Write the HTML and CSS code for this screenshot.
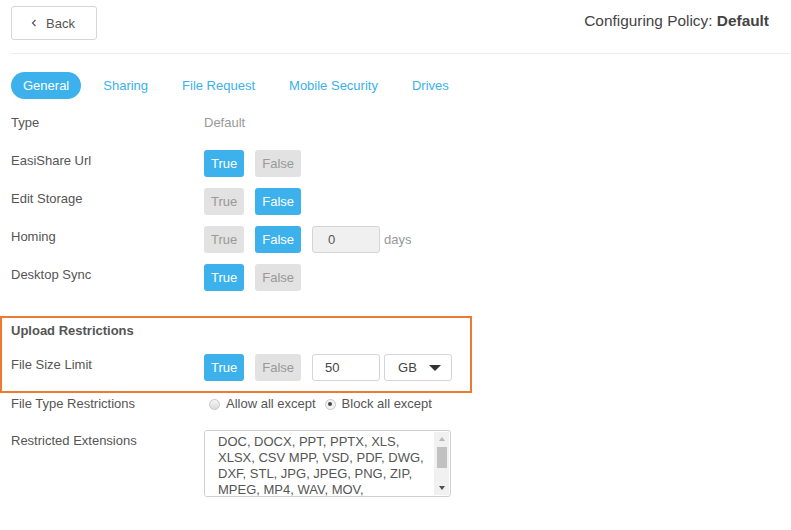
FILE: index.html
```html
<!DOCTYPE html>
<html lang="en">
  <head>
    <meta charset="UTF-8" />
    <meta name="viewport" content="width=device-width, initial-scale=1.0" />
    <title>Configuring Policy</title>
    <link rel="stylesheet" href="styles.css">
  </head>
  <body>
    <div class="page">
      <div class="topbar">
        <button class="back-btn" type="button">
          <svg class="chevron" width="6" height="8" viewBox="0 0 6 8">
            <path d="M4.5 1 L1.5 4 L4.5 7" fill="none" stroke="#555" stroke-width="1.2" />
          </svg>
          Back
        </button>
        <div class="policy-title">Configuring Policy: <b>Default</b></div>
      </div>

      <div class="tabs">
        <a class="tab active">General</a>
        <a class="tab">Sharing</a>
        <a class="tab">File Request</a>
        <a class="tab">Mobile Security</a>
        <a class="tab">Drives</a>
      </div>

      <div class="settings">
        <div class="row">
          <div class="label">Type</div>
          <div class="value muted">Default</div>
        </div>

        <div class="row">
          <div class="label">EasiShare Url</div>
          <div class="controls">
            <button class="toggle on">True</button>
            <button class="toggle">False</button>
          </div>
        </div>

        <div class="row">
          <div class="label">Edit Storage</div>
          <div class="controls">
            <button class="toggle">True</button>
            <button class="toggle on">False</button>
          </div>
        </div>

        <div class="row">
          <div class="label">Homing</div>
          <div class="controls">
            <button class="toggle">True</button>
            <button class="toggle on">False</button>
            <input class="num-input disabled" type="text" value="0" disabled />
            <span class="unit">days</span>
          </div>
        </div>

        <div class="row">
          <div class="label">Desktop Sync</div>
          <div class="controls">
            <button class="toggle on">True</button>
            <button class="toggle">False</button>
          </div>
        </div>

        <div class="highlight-box">
          <div class="section-title">Upload Restrictions</div>
          <div class="row last">
            <div class="label">File Size Limit</div>
            <div class="controls">
              <button class="toggle on">True</button>
              <button class="toggle">False</button>
              <input class="num-input" type="text" value="50" />
              <div class="select-box">
                <span>GB</span>
                <span class="caret"></span>
              </div>
            </div>
          </div>
        </div>

        <div class="row radio-row">
          <div class="label">File Type Restrictions</div>
          <div class="radios">
            <label class="radio"><span class="dot"></span>Allow all except</label>
            <label class="radio"><span class="dot checked"></span>Block all except</label>
          </div>
        </div>

        <div class="row">
          <div class="label">Restricted Extensions</div>
          <div class="ext-box">
            <textarea class="ext-list">DOC, DOCX, PPT, PPTX, XLS, XLSX, CSV MPP, VSD, PDF, DWG, DXF, STL, JPG, JPEG, PNG, ZIP, MPEG, MP4, WAV, MOV,
AVI, WMV, MP3, TXT, RTF, MKV, GIF, BMP, TIF, TIFF, PSD, AI, EPS, SVG, KEY, NUMBERS, PAGES</textarea>
            <div class="scrollbar">
              <span class="arrow up"></span>
              <div class="track"><div class="thumb"></div></div>
              <span class="arrow down"></span>
            </div>
          </div>
        </div>
      </div>
    </div>
  </body>
</html>
```

FILE: styles.css
```css
* {
  margin: 0;
  padding: 0;
  box-sizing: border-box;
}

body {
  font-family: 'Liberation Sans', Arial, sans-serif;
  font-size: 13px;
  color: #555;
  background: #fff;
}

.page {
  padding: 6px 1px 0 0;
}

.topbar {
  display: flex;
  justify-content: space-between;
  align-items: flex-start;
  margin-left: 11px;
  padding-right: 21px;
  height: 48px;
  border-bottom: 1px solid #ececf0;
}

.back-btn {
  width: 86px;
  height: 34px;
  border: 1px solid #d6d6d6;
  border-radius: 3px;
  background: #fff;
  font-family: inherit;
  font-size: 13px;
  color: #555;
  display: flex;
  align-items: center;
  justify-content: center;
  gap: 9px;
  padding-right: 2px;
}

.chevron {
  display: block;
}

.policy-title {
  font-size: 15.4px;
  color: #444;
  margin-top: 6px;
}

.tabs {
  display: flex;
  gap: 10px;
  margin: 18px 0 0 11px;
}

.tab {
  height: 27px;
  line-height: 27px;
  padding: 0 12px;
  border-radius: 14px;
  color: #3cb1ec;
  cursor: pointer;
}

.tab.active {
  background: #3cb1ec;
  color: #fff;
}

.settings {
  margin-top: 13px;
}

.row {
  display: flex;
  align-items: flex-start;
  padding-left: 11px;
  margin-bottom: 11px;
  min-height: 27px;
}

.label {
  width: 193px;
  flex: none;
  line-height: 20px;
  padding-top: 1px;
}

.value {
  line-height: 20px;
  padding-top: 1px;
}

.muted {
  color: #999;
}

.controls {
  display: flex;
  align-items: center;
}

.toggle {
  height: 27px;
  padding: 0 7px;
  border: none;
  border-radius: 3px;
  background: #e2e2e2;
  color: #999;
  font-family: inherit;
  font-size: 13px;
  margin-right: 11px;
}

.toggle.on {
  background: #3cb1ec;
  color: #fff;
}

.num-input {
  width: 68px;
  height: 27px;
  border: 1px solid #d4d4d4;
  border-radius: 3px;
  padding: 0 12px;
  font-family: inherit;
  font-size: 13px;
  color: #444;
  background: #fff;
}

.num-input.disabled {
  background: #f0f0f0;
  color: #555;
  padding-left: 15px;
}

.unit {
  color: #999;
  margin-left: 4px;
}

.select-box {
  width: 68px;
  height: 27px;
  margin-left: 4px;
  border: 1px solid #d4d4d4;
  border-radius: 3px;
  display: flex;
  align-items: center;
  justify-content: space-between;
  padding: 0 10px 0 13px;
  color: #444;
}

.caret {
  width: 0;
  height: 0;
  border-left: 6px solid transparent;
  border-right: 6px solid transparent;
  border-top: 6px solid #333;
}

.highlight-box {
  width: 472px;
  border: 2px solid #ec7b30;
  margin-top: 25px;
  padding-top: 3px;
}

.highlight-box .row {
  padding-left: 9px;
}

.section-title {
  font-weight: bold;
  line-height: 20px;
  padding-left: 9px;
  margin-bottom: 13px;
}

.highlight-box .row.last {
  margin-bottom: 10px;
}

.radio-row {
  min-height: 26px;
}

.radios {
  display: flex;
  align-items: center;
  line-height: 20px;
  padding-left: 5px;
  padding-top: 1px;
}

.radio {
  display: flex;
  align-items: center;
  margin-right: 9px;
  color: #555;
}

.dot {
  width: 11px;
  height: 11px;
  border-radius: 50%;
  border: 1px solid #c8c8c8;
  background: linear-gradient(#f4f4f4, #dcdcdc);
  margin-right: 6px;
  position: relative;
}

.dot.checked {
  background: #f2f2f2;
}

.dot.checked::after {
  content: '';
  position: absolute;
  top: 2.5px;
  left: 2.5px;
  width: 4px;
  height: 4px;
  border-radius: 50%;
  background: #444;
}

.ext-box {
  display: flex;
  width: 247px;
  height: 67px;
  border: 1px solid #cfcfcf;
  border-radius: 3px;
  overflow: hidden;
}

.ext-list {
  flex: 1;
  min-width: 0;
  border: none;
  outline: none;
  padding: 3px 4px 0 13px;
  font-family: inherit;
  font-size: 13px;
  line-height: 16px;
  color: #555;
  resize: none;
  overflow: hidden;
}

.scrollbar {
  width: 15px;
  margin: 1px 1px 1px 0;
  background: #f1f1f1;
  display: flex;
  flex-direction: column;
  align-items: center;
}

.arrow {
  width: 0;
  height: 0;
  border-left: 3.5px solid transparent;
  border-right: 3.5px solid transparent;
}

.arrow.up {
  border-bottom: 4px solid #b8b8b8;
  margin: 5px 0 4px;
}

.arrow.down {
  border-top: 4px solid #505050;
  margin: 5px 0 5px;
}

.track {
  flex: 1;
  width: 100%;
  display: flex;
  justify-content: center;
}

.thumb {
  width: 10px;
  height: 21px;
  margin-top: 2px;
  background: #c1c1c1;
}
```
